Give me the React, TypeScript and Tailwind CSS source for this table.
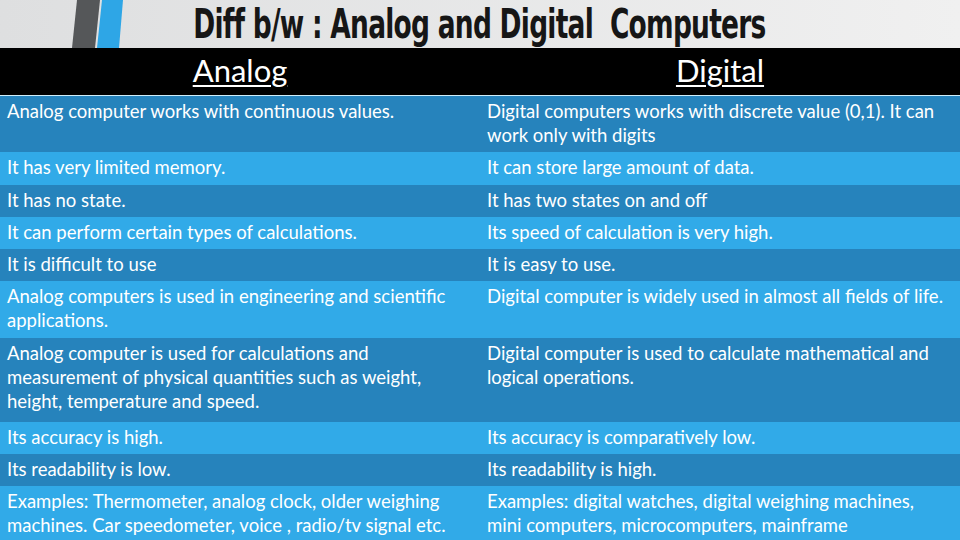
import React from 'react';

interface Row {
  analog: string;
  digital: string;
  height: string;
  tone: string;
}

const dark = 'bg-[#2683bc]';
const light = 'bg-[#31aae8]';

const rows: Row[] = [
  {
    analog: 'Analog computer works with continuous values.',
    digital: 'Digital computers works with discrete value (0,1). It can work only with digits',
    height: 'h-[56px]',
    tone: dark,
  },
  { analog: 'It has very limited memory.', digital: 'It can store large amount of data.', height: 'h-[33px]', tone: light },
  { analog: 'It has no state.', digital: 'It has two states on and off', height: 'h-[32px]', tone: dark },
  {
    analog: 'It can perform certain types of calculations.',
    digital: 'Its speed of calculation is very high.',
    height: 'h-[32px]',
    tone: light,
  },
  { analog: 'It is difficult to use', digital: 'It is easy to use.', height: 'h-[32px]', tone: dark },
  {
    analog: 'Analog computers is used in engineering and scientific applications.',
    digital: 'Digital computer is widely used in almost all fields of life.',
    height: 'h-[57px]',
    tone: light,
  },
  {
    analog:
      'Analog computer is used for calculations and measurement of physical quantities such as weight, height, temperature and speed.',
    digital: 'Digital computer is used to calculate mathematical and logical operations.',
    height: 'h-[84px]',
    tone: dark,
  },
  { analog: 'Its accuracy is high.', digital: 'Its accuracy is comparatively low.', height: 'h-[32px]', tone: light },
  { analog: 'Its readability is low.', digital: 'Its readability is high.', height: 'h-[32px]', tone: dark },
  {
    analog: 'Examples: Thermometer, analog clock, older weighing machines. Car speedometer, voice , radio/tv signal etc.',
    digital: 'Examples: digital watches, digital weighing machines, mini computers, microcomputers, mainframe',
    height: 'h-[54px]',
    tone: light,
  },
];

function Stripes() {
  return (
    <svg width="130" height="48" viewBox="0 0 130 48" className="shrink-0">
      <polygon points="77,0 100,0 95,48 72,48" fill="#555759" />
      <polygon points="102,0 123,0 119,48 97,48" fill="#2ea6e6" />
    </svg>
  );
}

export default function App() {
  return (
    <div className="w-[960px] h-[540px] overflow-hidden flex flex-col bg-[#e4e5e6] font-['Lato',sans-serif]">
      {/* title bar */}
      <div className="h-[48px] flex items-end bg-gradient-to-r from-[#dedfe0] to-[#f0f0f0]">
        <Stripes />
        <div className="flex-1 min-w-0 h-[48px] flex items-center justify-center pr-[132px] pb-[1px]">
          <h1 className="shrink-0 text-[#161616] text-[40px] leading-none font-bold whitespace-pre font-['DejaVu_Sans_Condensed','DejaVu_Sans',sans-serif] tracking-[-1px] scale-x-[0.735] origin-center">
            Diff b/w : Analog and Digital  Computers
          </h1>
        </div>
      </div>

      {/* column headings */}
      <div className="h-[47px] bg-black grid grid-cols-2 text-white text-[31px] leading-none">
        <div className="flex items-center justify-center pb-[2px]">
          <span className="underline underline-offset-[3px] decoration-[2px]">Analog</span>
        </div>
        <div className="flex items-center justify-center pb-[2px]">
          <span className="underline underline-offset-[3px] decoration-[2px]">Digital</span>
        </div>
      </div>
      <div className="h-[1px] bg-[#cfeefb]" />

      {/* comparison rows */}
      <div className="flex flex-col text-white text-[18.5px] leading-[24px]">
        {rows.map((r, i) => (
          <div key={i} className={`grid grid-cols-2 ${r.height} ${r.tone}`}>
            <div className="pt-[3px] pl-[7px] pr-[14px]">{r.analog}</div>
            <div className="pt-[3px] pl-[7px] pr-[8px]">{r.digital}</div>
          </div>
        ))}
      </div>
    </div>
  );
}
